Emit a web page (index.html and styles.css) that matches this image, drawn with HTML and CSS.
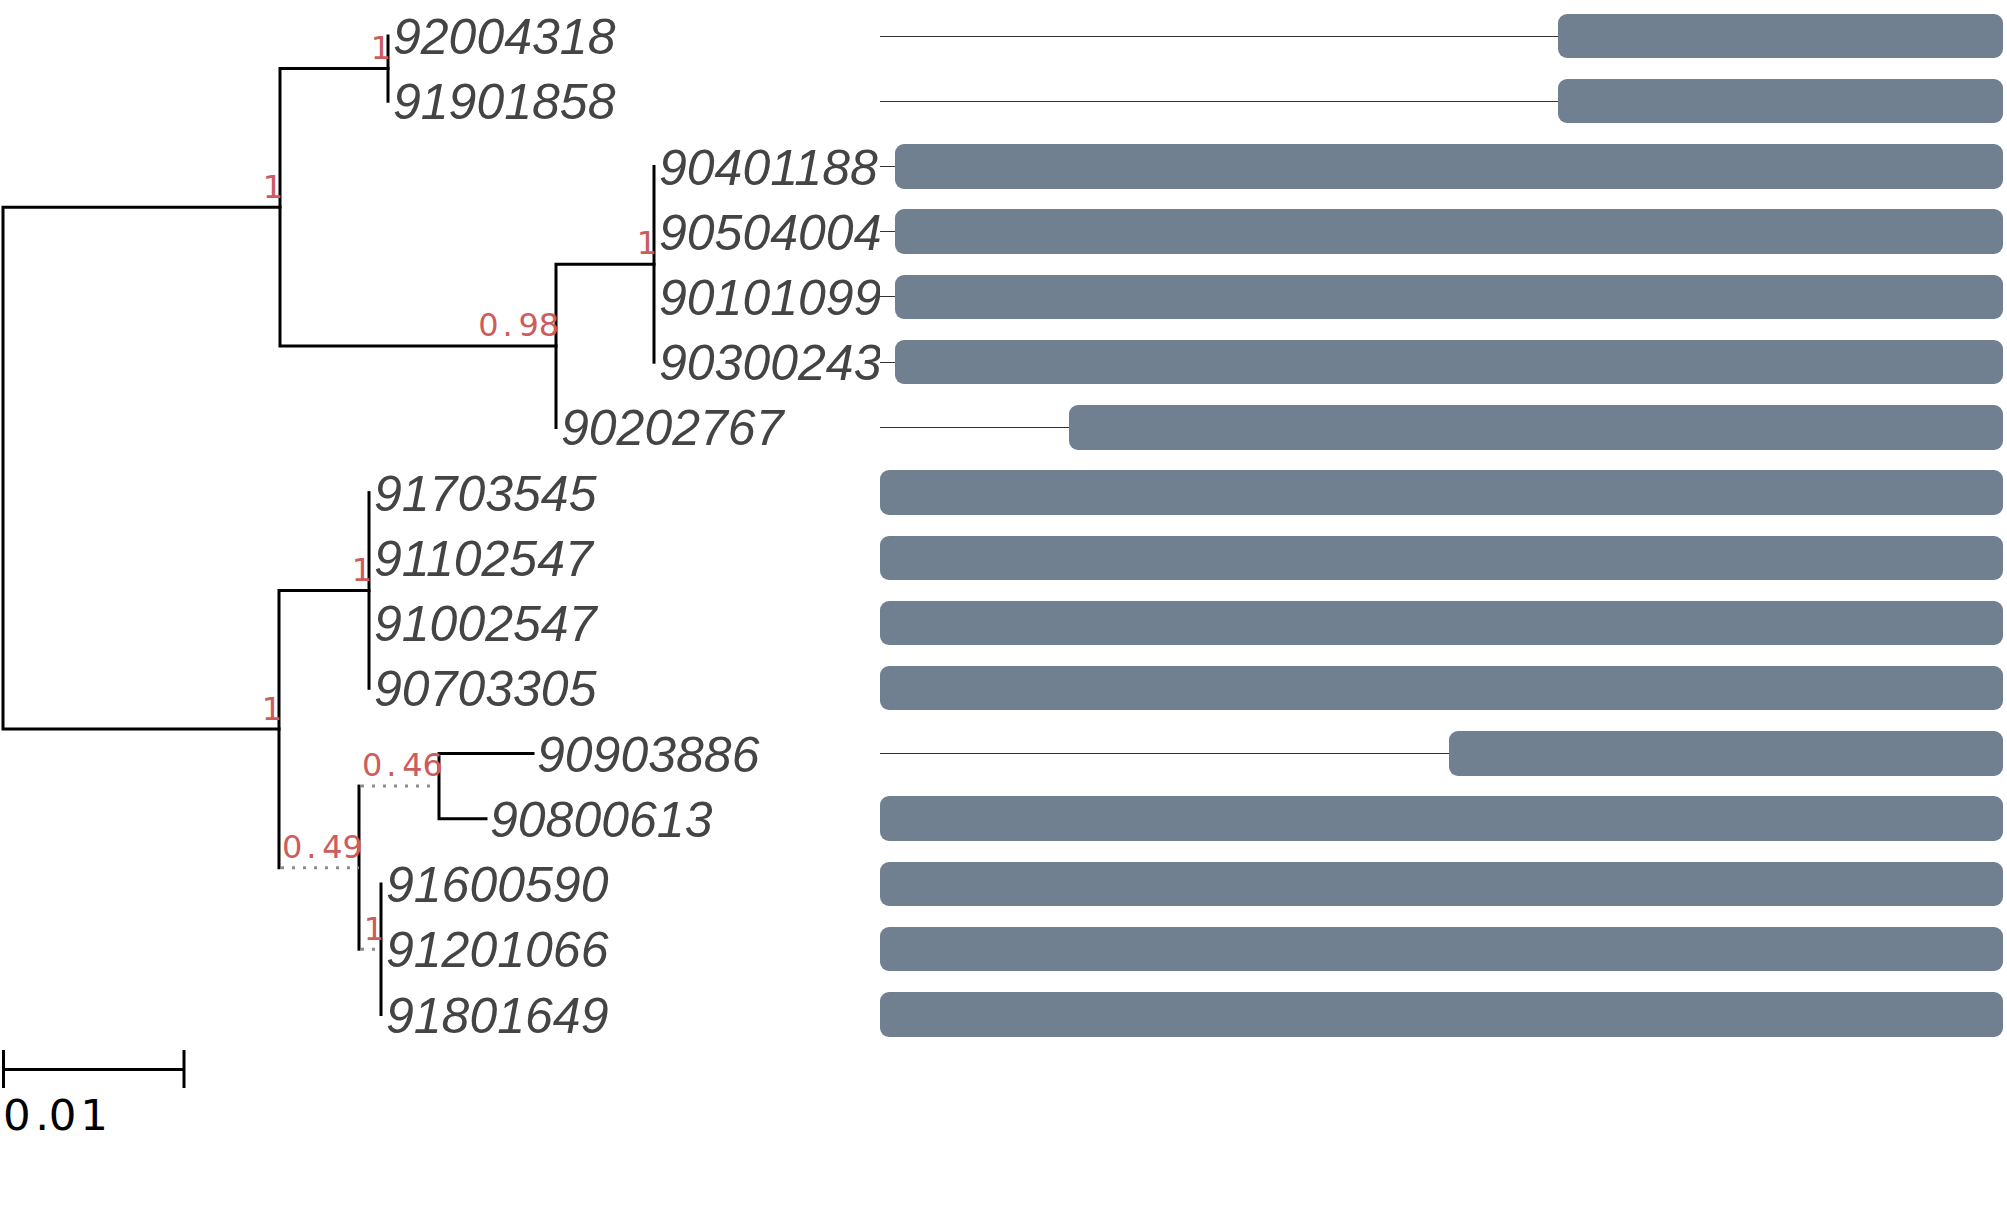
FILE: index.html
```html
<!DOCTYPE html>
<html lang="en">
<head>
<meta charset="utf-8">
<title>Phylogenetic tree with alignment coverage</title>
<link rel="stylesheet" href="styles.css">
</head>
<body>
<main class="plot">
  <svg class="tree" width="880" height="1232" viewBox="0 0 880 1232">
    <g class="branch">
      <path d="M3 207.2 V729.1 M3 207.2 H280 M3 729.1 H279"/>
      <path d="M280 68.6 V345.9 M280 68.6 H388 M280 345.9 H556"/>
      <path d="M388 36 V101.2"/>
      <path d="M556 264.3 V427.4 M556 264.3 H654"/>
      <path d="M654 166.5 V362.2"/>
      <path d="M279 590.5 V867.7 M279 590.5 H369"/>
      <path d="M369 492.6 V688.3"/>
      <path d="M359 786.1 V949.2"/>
      <path d="M439 753.5 V818.8 M439 753.5 H533 M439 818.8 H486"/>
      <path d="M381 884 V1014.5"/>
    </g>
    <g class="branch-weak">
      <path d="M281 867.7 H359"/>
      <path d="M361 786.1 H438"/>
      <path d="M361 949.2 H380"/>
    </g>
    <g class="tip">
      <text x="393" y="54">92004318</text>
      <text x="393" y="119.2">91901858</text>
      <text x="659" y="184.5">90401188</text>
      <text x="659" y="249.7">90504004</text>
      <text x="659" y="314.9">90101099</text>
      <text x="659" y="380.2">90300243</text>
      <text x="561" y="445.4">90202767</text>
      <text x="374" y="510.6">91703545</text>
      <text x="374" y="575.8">91102547</text>
      <text x="374" y="641.1">91002547</text>
      <text x="374" y="706.3">90703305</text>
      <text x="537" y="771.5">90903886</text>
      <text x="490" y="836.8">90800613</text>
      <text x="386" y="902">91600590</text>
      <text x="386" y="967.2">91201066</text>
      <text x="386" y="1032.5">91801649</text>
    </g>
    <g class="support">
      <text class="one" x="391" y="59.3">1</text>
      <text class="one" x="283" y="197.5">1</text>
      <text class="one" x="657" y="254">1</text>
      <text class="one" x="372" y="581">1</text>
      <text class="one" x="282" y="719.5">1</text>
      <text class="one" x="384" y="940">1</text>
      <text class="frac" x="478.2 502.5 518.6 538.8" y="336">0.98</text>
      <text class="frac" x="361.9 386.2 402.3 422.5" y="776">0.46</text>
      <text class="frac" x="281.9 306.2 322.3 342.5" y="858">0.49</text>
    </g>
    <g class="scale">
      <path d="M3.5 1069.5 H184 M3.5 1050 V1088 M184 1050 V1088"/>
      <text x="3.1 35.3 48.8 80.2" y="1130">0.01</text>
    </g>
  </svg>
  <section class="tracks">
    <div class="track"><span class="stem"></span><span class="bar" style="width:445px"></span></div>
    <div class="track"><span class="stem"></span><span class="bar" style="width:445px"></span></div>
    <div class="track"><span class="stem"></span><span class="bar" style="width:1108px"></span></div>
    <div class="track"><span class="stem"></span><span class="bar" style="width:1108px"></span></div>
    <div class="track"><span class="stem"></span><span class="bar" style="width:1108px"></span></div>
    <div class="track"><span class="stem"></span><span class="bar" style="width:1108px"></span></div>
    <div class="track"><span class="stem"></span><span class="bar" style="width:934.5px"></span></div>
    <div class="track"><span class="stem"></span><span class="bar" style="width:1123px"></span></div>
    <div class="track"><span class="stem"></span><span class="bar" style="width:1123px"></span></div>
    <div class="track"><span class="stem"></span><span class="bar" style="width:1123px"></span></div>
    <div class="track"><span class="stem"></span><span class="bar" style="width:1123px"></span></div>
    <div class="track"><span class="stem"></span><span class="bar" style="width:554px"></span></div>
    <div class="track"><span class="stem"></span><span class="bar" style="width:1123px"></span></div>
    <div class="track"><span class="stem"></span><span class="bar" style="width:1123px"></span></div>
    <div class="track"><span class="stem"></span><span class="bar" style="width:1123px"></span></div>
    <div class="track"><span class="stem"></span><span class="bar" style="width:1123px"></span></div>
  </section>
</main>
</body>
</html>
```
FILE: styles.css
```css
html, body {
  margin: 0;
  padding: 0;
  background: #ffffff;
}

.plot {
  display: grid;
  grid-template-columns: 880px 1123px;
  width: 2007px;
  height: 1232px;
  overflow: hidden;
}

.tree {
  display: block;
}

.branch path {
  fill: none;
  stroke: #000000;
  stroke-width: 3;
  stroke-linecap: square;
}

.branch-weak path {
  fill: none;
  stroke: #8c8c8c;
  stroke-width: 3;
  stroke-dasharray: 3 8;
  stroke-linecap: butt;
}

.tip text {
  font-family: "Liberation Sans", Arial, sans-serif;
  font-style: italic;
  font-size: 50px;
  fill: #444444;
}

.support text {
  font-family: "DejaVu Sans", sans-serif;
  fill: #cd5c5c;
}

.support .one {
  font-size: 32px;
  text-anchor: end;
}

.support .frac {
  font-size: 32px;
  text-anchor: start;
}

.scale path {
  fill: none;
  stroke: #000000;
  stroke-width: 3;
}

.scale text {
  font-family: "DejaVu Sans", sans-serif;
  font-size: 43.5px;
  fill: #000000;
}

.tracks {
  display: flex;
  flex-direction: column;
  padding-top: 3.4px;
}

.track {
  display: flex;
  align-items: center;
  height: 65.23px;
  flex: 0 0 auto;
}

.stem {
  flex: 1 1 auto;
  height: 1px;
  background: #333333;
}

.bar {
  flex: 0 0 auto;
  height: 44.5px;
  border-radius: 9px;
  background: #708090;
}
```
